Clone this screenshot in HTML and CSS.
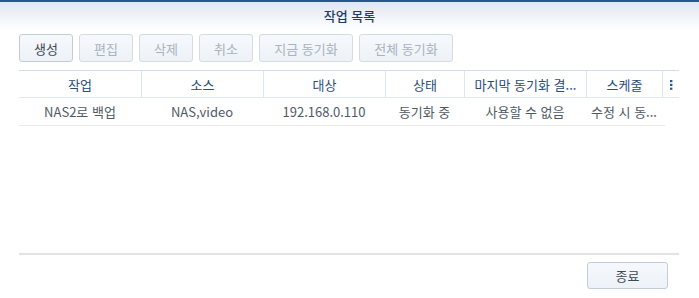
FILE: index.html
```html
<!DOCTYPE html>
<html lang="ko">
<head>
  <meta charset="UTF-8">
  <title>작업 목록</title>
  <link rel="stylesheet" href="styles.css">
</head>
<body>
  <div class="dialog">
    <div class="title-bar">작업 목록</div>

    <div class="toolbar">
      <button class="btn">생성</button>
      <button class="btn" disabled>편집</button>
      <button class="btn" disabled>삭제</button>
      <button class="btn" disabled>취소</button>
      <button class="btn wide" disabled>지금 동기화</button>
      <button class="btn wide" disabled>전체 동기화</button>
    </div>

    <div class="grid">
      <div class="grid-head">
        <div class="cell">작업</div>
        <div class="cell">소스</div>
        <div class="cell">대상</div>
        <div class="cell">상태</div>
        <div class="cell">마지막 동기화 결...</div>
        <div class="cell">스케줄</div>
        <div class="cell menu">
          <svg width="4" height="10" viewBox="0 0 4 10"><rect x="1" y="0" width="2.4" height="2.2" fill="#2a5790"/><rect x="1" y="3.8" width="2.4" height="2.2" fill="#2a5790"/><rect x="1" y="7.6" width="2.4" height="2.2" fill="#2a5790"/></svg>
        </div>
      </div>
      <div class="grid-row">
        <div class="cell">NAS2로 백업</div>
        <div class="cell">NAS,video</div>
        <div class="cell">192.168.0.110</div>
        <div class="cell">동기화 중</div>
        <div class="cell">사용할 수 없음</div>
        <div class="cell">수정 시 동...</div>
      </div>
    </div>

    <div class="footer">
      <button class="btn close">종료</button>
    </div>
  </div>
</body>
</html>
```

FILE: styles.css
```css
* {
  box-sizing: border-box;
}

body {
  margin: 0;
  font-family: "Noto Sans CJK KR", "Noto Sans", sans-serif;
  font-size: 13px;
  color: #4f5a66;
  background-color: #fff;
}

.dialog {
  height: 298px;
  display: flex;
  flex-direction: column;
}

.title-bar {
  height: 30px;
  border-top: 2px solid #2b5691;
  background: linear-gradient(#e0e7f0, #ffffff);
  text-align: center;
  font-size: 13px;
  font-weight: 500;
  color: #1f3c66;
  line-height: 28px;
}

.toolbar {
  display: flex;
  gap: 6px;
  padding: 4px 19px 0;
}

.btn {
  height: 28px;
  width: 54px;
  padding: 0;
  font-family: inherit;
  font-size: 13px;
  color: #3f4955;
  background: linear-gradient(#f6f9fc, #edf2f8);
  border: 1px solid #c2ccd8;
  border-radius: 3px;
}

.btn:disabled {
  color: #a9b3be;
  border-color: #d3dbe4;
}

.btn.wide {
  width: 94px;
}

.grid {
  flex: 1;
  margin: 8px 20px 0 19px;
  border-top: 1px solid #d3deeb;
}

.grid-head,
.grid-row {
  display: grid;
  grid-template-columns: 122px 122px 122px 79px 122px 76px 17px;
}

.grid-head {
  height: 27px;
  border-bottom: 1px solid #e3e8ee;
  color: #2a4d79;
}

.grid-head .cell + .cell {
  border-left: 1px solid #dce6f1;
}

.grid-row {
  height: 28px;
  width: 646px;
  border-bottom: 1px solid #e6e9ed;
}

.cell {
  display: flex;
  align-items: center;
  justify-content: center;
  white-space: nowrap;
  overflow: hidden;
}

.menu {
  padding-top: 1px;
}

.footer {
  margin: 0 20px 0 19px;
  height: 45px;
  border-top: 2px solid #e3e3e3;
  display: flex;
  justify-content: flex-end;
  align-items: flex-start;
  padding: 7px 11px 0 0;
}

.btn.close {
  width: 81px;
  height: 27px;
  color: #3f4955;
}
```
